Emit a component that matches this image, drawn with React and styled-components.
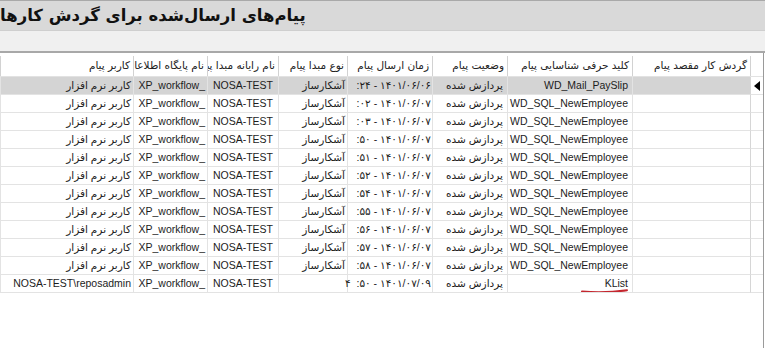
import styled, { createGlobalStyle } from "styled-components";

const GlobalStyle = createGlobalStyle`
  html, body {
    margin: 0;
    padding: 0;
    background: #ffffff;
  }
  body {
    font-family: "Liberation Sans", "DejaVu Sans", sans-serif;
    width: 765px;
    height: 348px;
    overflow: hidden;
  }
`;

const columns = [
  { title: "", width: 13 },
  { title: "گردش کار مقصد پیام", width: 118 },
  { title: "کلید حرفی شناسایی پیام", width: 125 },
  { title: "وضعیت پیام", width: 75 },
  { title: "زمان ارسال پیام", width: 85 },
  { title: "نوع مبدا پیام", width: 69 },
  { title: "نام رایانه مبدا پیام", width: 71 },
  { title: "نام پایگاه اطلاعات مبدا", width: 74 },
  { title: "کاربر پیام", width: 133 },
];

const template = columns.map((c) => `${c.width}px`).join(" ");

const rows = [
  { key: "WD_Mail_PaySlip", time: ":۲۴ - ۱۴۰۱/۰۶/۰۶", selected: true },
  { key: "WD_SQL_NewEmployee", time: ":۰۲ - ۱۴۰۱/۰۶/۰۷" },
  { key: "WD_SQL_NewEmployee", time: ":۰۳ - ۱۴۰۱/۰۶/۰۷" },
  { key: "WD_SQL_NewEmployee", time: ":۵۰ - ۱۴۰۱/۰۶/۰۷" },
  { key: "WD_SQL_NewEmployee", time: ":۵۱ - ۱۴۰۱/۰۶/۰۷" },
  { key: "WD_SQL_NewEmployee", time: ":۵۲ - ۱۴۰۱/۰۶/۰۷" },
  { key: "WD_SQL_NewEmployee", time: ":۵۴ - ۱۴۰۱/۰۶/۰۷" },
  { key: "WD_SQL_NewEmployee", time: ":۵۵ - ۱۴۰۱/۰۶/۰۷" },
  { key: "WD_SQL_NewEmployee", time: ":۵۶ - ۱۴۰۱/۰۶/۰۷" },
  { key: "WD_SQL_NewEmployee", time: ":۵۷ - ۱۴۰۱/۰۶/۰۷" },
  { key: "WD_SQL_NewEmployee", time: ":۵۸ - ۱۴۰۱/۰۶/۰۷" },
  {
    key: "KList",
    time: "۴  :۵۰ - ۱۴۰۱/۰۷/۰۹",
    source: "",
    user: "NOSA-TEST\\reposadmin",
    marked: true,
  },
];

export default function App() {
  return (
    <>
      <GlobalStyle />
      <Page>
        <TitleBar>
          <Title>پیام‌های ارسال‌شده برای گردش کارها</Title>
        </TitleBar>
        <Toolbar />
        <Grid>
          <HeaderRow>
            {columns.map((c, i) => (
              <HeaderCell key={i}>{c.title}</HeaderCell>
            ))}
          </HeaderRow>
          {rows.map((r, i) => (
            <Row key={i} $selected={r.selected}>
              <RowHead>{r.selected && <Pointer />}</RowHead>
              <Cell />
              <Cell $pad={4}>
                <Ltr>{r.key}</Ltr>
                {r.marked && (
                  <Mark viewBox="0 0 48 6" width="48" height="6">
                    <path
                      d="M1 3.5 C 12 4.5, 30 4.5, 46 2.2"
                      stroke="#c4262e"
                      strokeWidth="2"
                      fill="none"
                      strokeLinecap="round"
                    />
                  </Mark>
                )}
              </Cell>
              <Cell $pad={4}>پردازش شده</Cell>
              <Cell $pad={1} $spill={r.source === ""}>
                <Ltr>{r.time}</Ltr>
              </Cell>
              <Cell $pad={2}>{r.source ?? "آشکارساز"}</Cell>
              <Cell $pad={5}>
                <Ltr>NOSA-TEST</Ltr>
              </Cell>
              <Cell $pad={2}>
                <Ltr>XP_workflow_</Ltr>
              </Cell>
              <Cell $pad={2}>
                {r.user ? <Ltr>{r.user}</Ltr> : "کاربر نرم افزار"}
              </Cell>
            </Row>
          ))}
        </Grid>
      </Page>
    </>
  );
}

const Page = styled.div`
  display: flex;
  flex-direction: column;
  width: 765px;
  height: 348px;
`;

const TitleBar = styled.div`
  height: 29px;
  border-top: 1px solid #a9a9a9;
  background: #d9d9d9;
  display: flex;
  align-items: center;
  justify-content: flex-end;
  padding-right: 2px;
  direction: rtl;
`;

const Title = styled.h1`
  margin: 0;
  font-family: "DejaVu Sans", sans-serif;
  font-size: 16.5px;
  font-weight: bold;
  color: #111;
  direction: rtl;
  white-space: pre;
`;

const Toolbar = styled.div`
  height: 20px;
  background: #f0f0f0;
  border-top: 1px solid #cfcfcf;
  border-bottom: 2px solid #a8a8a8;
  box-shadow: 0 1px 0 #ffffff;
`;

const Grid = styled.div`
  flex: 1;
  direction: rtl;
  background: #ffffff;
  border-right: 1px solid #9a9a9a;
  margin-right: 1px;
  padding-top: 3px;
`;

const HeaderRow = styled.div`
  display: grid;
  grid-template-columns: ${template};
  height: 20px;
  border-bottom: 1px solid #e2e2e2;
`;

const HeaderCell = styled.div`
  border-left: 1px solid #d2d2d2;
  font-family: "DejaVu Sans", sans-serif;
  font-size: 10.5px;
  color: #222;
  line-height: 19px;
  padding-right: 3px;
  white-space: nowrap;
  overflow: hidden;
`;

const Row = styled.div`
  display: grid;
  grid-template-columns: ${template};
  height: 18px;
  & > div:not(:first-child) {
    background: ${(p) => (p.$selected ? "#d4d4d4" : "#ffffff")};
  }
`;

const Cell = styled.div`
  position: relative;
  z-index: ${(p) => (p.$spill ? 1 : 0)};
  border-left: 1px solid #e3e3e3;
  border-bottom: 1px solid #e3e3e3;
  font-size: 10.5px;
  line-height: 17px;
  color: #1c1c1c;
  padding-right: ${(p) => p.$pad ?? 3}px;
  white-space: pre;
  overflow: ${(p) => (p.$spill ? "visible" : "hidden")};
  font-family: "Liberation Sans", "DejaVu Sans", sans-serif;
`;

const RowHead = styled.div`
  border-left: 1px solid #d6d6d6;
  border-bottom: 1px solid #e3e3e3;
  display: flex;
  align-items: center;
  justify-content: center;
`;

const Pointer = styled.span`
  width: 0;
  height: 0;
  border-top: 5px solid transparent;
  border-bottom: 5px solid transparent;
  border-right: 6px solid #000;
`;

const Ltr = styled.span`
  direction: ltr;
  unicode-bidi: isolate;
`;

const Mark = styled.svg`
  position: absolute;
  right: 3px;
  bottom: -2px;
`;
